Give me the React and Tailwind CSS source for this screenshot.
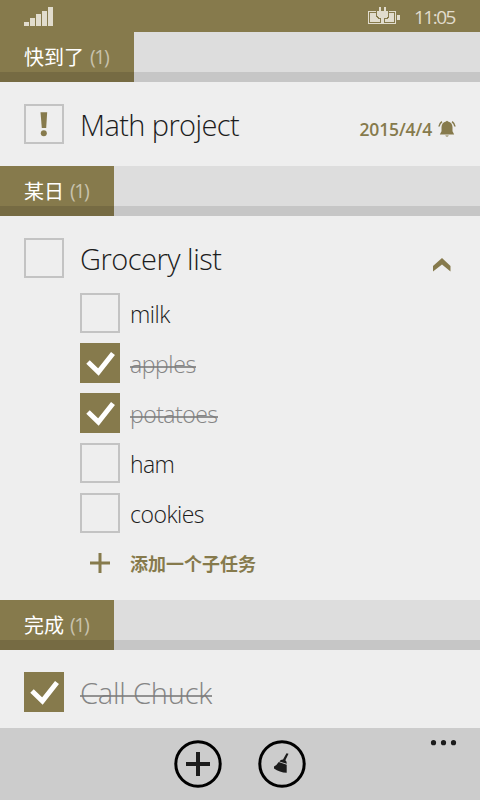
import React from "react";

function Check({ state }) {
  if (state === "done") {
    return (
      <div className="h-10 w-10 shrink-0 bg-[#867a4c]">
        <svg viewBox="0 0 40 40" className="block h-10 w-10" fill="none" stroke="#fff" strokeWidth="5">
          <path d="M8 19 L18.4 29 L33 10.5" />
        </svg>
      </div>
    );
  }
  return (
    <div className="h-10 w-10 shrink-0 border-2 border-[#c3c3c3]">
      {state === "important" && (
        <svg viewBox="0 0 36 36" className="block h-9 w-9" fill="#867a4c">
          <path d="M14.5 6.2H21.2L20.2 22H15.8Z" />
          <circle cx="17.8" cy="27.2" r="3" />
        </svg>
      )}
    </div>
  );
}

function Header({ title, className }) {
  return (
    <div className="h-[50px] shrink-0 bg-[#dddddd]">
      <div className="flex h-10">
        <div className={`flex pl-6 text-[20px] leading-[50px] whitespace-nowrap text-white bg-[#867a4c] ${className}`}>
          <span className="h-10 font-['Noto_Sans_CJK_SC',sans-serif] font-normal">{title}</span>
          <span className="ml-[6px] h-10 text-[19.5px] leading-[49px] tracking-[-1.4px] text-[#c8c2ad]">(1)</span>
        </div>
      </div>
      <div className="flex h-[10px] bg-[#c6c6c6]">
        <div className={`bg-[#766b43] ${className}`} />
      </div>
    </div>
  );
}

function SubTask({ label, done, className }) {
  return (
    <div className="flex h-10 gap-[10px]">
      <Check state={done ? "done" : "open"} />
      <div className={`relative mt-[1px] h-10 self-start text-[23px] leading-10 font-light whitespace-nowrap ${done ? "text-[#858585]" : "text-[#1c1c1c]"} ${className}`}>
        {label}
        {done && <div className="absolute top-[22px] left-0 h-[2px] w-full bg-[#7b7b7b]/80" />}
      </div>
    </div>
  );
}

export default function App() {
  return (
    <div className="flex h-[800px] w-[480px] flex-col overflow-hidden bg-[#eeeeee] font-['Open_Sans','Noto_Sans_CJK_SC',sans-serif]">
      <div className="flex h-8 shrink-0 bg-[#867a4c] pl-6 text-[#e1dccd]">
        <svg width="30" height="32" className="block" fill="currentColor" shapeRendering="crispEdges">
          <path d="M0 22h5v4H0zM6 18h5v8H6zM12 14h5v12h-5zM18 11h5v15h-5zM24 7h5v19h-5z" />
        </svg>
        <svg width="34" height="32" className="ml-[313px] block" fill="currentColor" shapeRendering="crispEdges">
          <path d="M1 11h8v1H2v11h12v1H1zM22 11h7v13H17v-1h11V12h-6zM30 15h3v5h-3z" />
          <path d="M3 13h6v4l2 2h2v3H3zM22 13h5v9h-9v-3h2l2-2z" />
          <path d="M12 7h2v4h3V7h2v4h2v5l-2 2h-2v6h-3v-6h-2l-2-2v-5h2z" />
        </svg>
        <span className="ml-[13px] text-[19px] leading-[34px] tracking-[-1.5px]">11:05</span>
      </div>

      <Header title="快到了" className="w-[134px]" />
      <div className="flex h-[84px] shrink-0 gap-4 px-6 pt-[22px]">
        <Check state="important" />
        <div className="h-10 text-[29px] leading-[42px] font-light tracking-[-0.6px] whitespace-nowrap text-[#1c1c1c]">Math project</div>
        <div className="ml-auto flex h-10">
          <span className="mr-[6px] text-[17.5px] leading-[50px] font-semibold tracking-[-0.15px] whitespace-nowrap text-[#867a4c]">2015/4/4</span>
          <svg width="18" height="18" viewBox="0 0 18 18" className="mt-4 block" fill="#867a4c">
            <path d="M8 1.6Q9 -.2 10 1.6Q14.2 2.5 14.5 7V11.3L16.2 14.5H1.8L3.5 11.3V7Q3.8 2.5 8 1.6ZM7.2 15.4h3.6Q9 17.8 7.2 15.4Z" />
            <path d="M1 6.5Q1.4 3.7 3.9 1.7M17 6.5Q16.6 3.7 14.1 1.7" fill="none" stroke="#867a4c" strokeWidth="1.6" />
          </svg>
        </div>
      </div>

      <Header title="某日" className="w-[114px]" />
      <div className="h-[384px] shrink-0 px-6 pt-[22px]">
        <div className="flex h-10 gap-4">
          <Check state="open" />
          <div className="h-10 text-[29px] leading-[42px] font-light tracking-[-0.5px] whitespace-nowrap text-[#1c1c1c]">Grocery list</div>
          <svg width="20" height="16" viewBox="0 0 20 16" className="mt-[19px] mr-[4px] ml-auto block" fill="#867a4c">
            <path d="M1 9L10 1L18.5 9V14.5L10 7.5L1 14.5Z" />
          </svg>
        </div>
        <div className="mt-[15px] flex flex-col gap-[10px] pl-14">
          <SubTask label="milk" className="tracking-[-0.5px]" />
          <SubTask label="apples" done className="tracking-[-0.4px]" />
          <SubTask label="potatoes" done className="tracking-[-0.5px]" />
          <SubTask label="ham" className="tracking-[-0.6px]" />
          <SubTask label="cookies" className="tracking-[-0.5px]" />
          <div className="flex h-10 gap-[10px]">
            <svg width="40" height="40" className="block" fill="#867a4c">
              <path d="M10 18.5h8.5V10h3v8.5H30v3h-8.5V30h-3v-8.5H10z" />
            </svg>
            <span className="font-['Noto_Sans_CJK_SC',sans-serif] text-[18px] leading-10 font-bold whitespace-nowrap text-[#867a4c]">添加一个子任务</span>
          </div>
        </div>
      </div>

      <Header title="完成" className="w-[114px]" />
      <div className="flex h-[78px] shrink-0 gap-4 px-6 pt-[22px]">
        <Check state="done" />
        <div className="relative h-10 text-[29px] leading-[42px] font-light tracking-[-0.2px] whitespace-nowrap text-[#858585]">
          Call Chuck
          <div className="absolute top-[23px] left-0 h-[2px] w-full bg-[#7b7b7b]/80" />
        </div>
      </div>

      <div className="relative flex h-[72px] shrink-0 justify-center gap-9 bg-[#cccccc] pt-3">
        <svg width="48" height="48" className="block">
          <circle cx="24" cy="24" r="22.2" fill="none" stroke="#000" strokeWidth="3" />
          <path d="M12 22h10V12h4v10h10v4H26v10h-4V26H12z" fill="#1c1c1c" />
        </svg>
        <svg width="48" height="48" className="block" fill="#1c1c1c">
          <circle cx="24" cy="24" r="22.2" fill="none" stroke="#000" strokeWidth="3" />
          <path d="M28.5 13.2L30.5 13.8L27.4 20.3Q29 21.6 28.7 23.8L21.4 21.4Q22.6 19.4 25 19.5Z" />
          <path d="M20.7 22L28.7 24.7V32.8Q21.5 32.3 16 28.4V26.5Q18.8 25.2 20.7 22Z" />
        </svg>
        <svg width="27" height="6" className="absolute top-3 left-[430px] block" fill="#1c1c1c">
          <circle cx="3.5" cy="2.7" r="2.6" />
          <circle cx="13.5" cy="2.7" r="2.6" />
          <circle cx="23.5" cy="2.7" r="2.6" />
        </svg>
      </div>
    </div>
  );
}
